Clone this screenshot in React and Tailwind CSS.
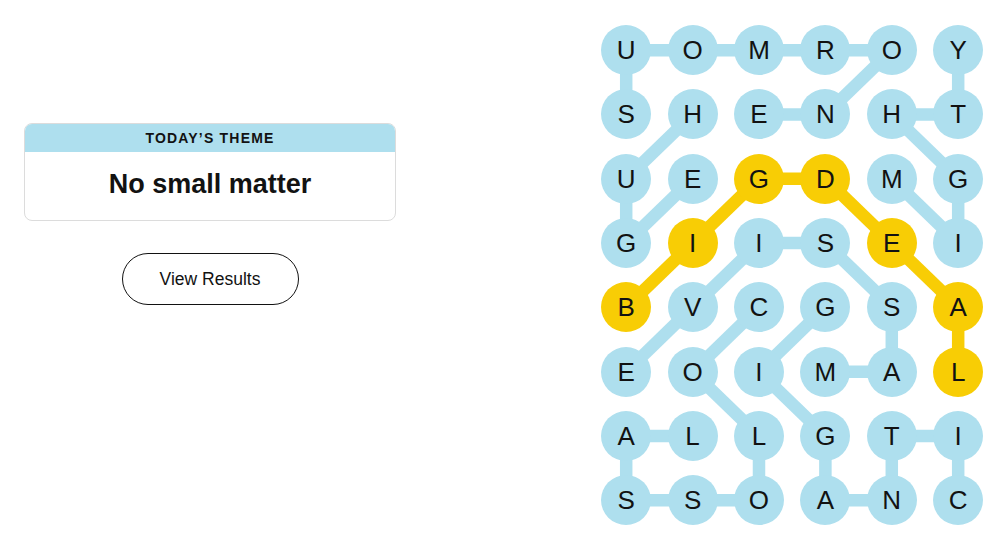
import React from "react";

const GRID = [
  "UOMROY",
  "SHENHT",
  "UEGDMG",
  "GIISEI",
  "BVCGSA",
  "EOIMAL",
  "ALLGTI",
  "SSOANC",
];

const CW = 66.4;
const CH = 64.3;

const BLUE_EDGES = [
  [[1, 2], [1, 3]], [[1, 3], [0, 4]], [[0, 4], [0, 3]], [[0, 3], [0, 2]], [[0, 2], [0, 1]], [[0, 1], [0, 0]], [[0, 0], [1, 0]],
  [[1, 1], [2, 0]], [[2, 0], [3, 0]], [[3, 0], [2, 1]],
  [[2, 4], [3, 5]], [[3, 5], [2, 5]], [[2, 5], [1, 4]], [[1, 4], [1, 5]], [[1, 5], [0, 5]],
  [[5, 3], [5, 4]], [[5, 4], [4, 4]], [[4, 4], [3, 3]], [[3, 3], [3, 2]], [[3, 2], [4, 1]], [[4, 1], [5, 0]],
  [[4, 2], [5, 1]], [[5, 1], [6, 2]], [[6, 2], [7, 2]], [[7, 2], [7, 1]], [[7, 1], [7, 0]], [[7, 0], [6, 0]], [[6, 0], [6, 1]],
  [[4, 3], [5, 2]], [[5, 2], [6, 3]], [[6, 3], [7, 3]], [[7, 3], [7, 4]], [[7, 4], [6, 4]], [[6, 4], [6, 5]], [[6, 5], [7, 5]],
];

const YELLOW_EDGES = [
  [[4, 0], [3, 1]], [[3, 1], [2, 2]], [[2, 2], [2, 3]], [[2, 3], [3, 4]], [[3, 4], [4, 5]], [[4, 5], [5, 5]],
];

const YELLOW = new Set(["4,0", "3,1", "2,2", "2,3", "3,4", "4,5", "5,5"]);

const cx = (c) => c * CW + CW / 2;
const cy = (r) => r * CH + CH / 2;

function Board() {
  return (
    <div className="relative w-[398.4px] h-[514.4px]">
      <svg className="absolute inset-0" width="398.4" height="514.4" viewBox="0 0 398.4 514.4">
        {BLUE_EDGES.map(([a, b], i) => (
          <line key={"b" + i} x1={cx(a[1])} y1={cy(a[0])} x2={cx(b[1])} y2={cy(b[0])} stroke="#aedfee" strokeWidth="12.5" />
        ))}
        {YELLOW_EDGES.map(([a, b], i) => (
          <line key={"y" + i} x1={cx(a[1])} y1={cy(a[0])} x2={cx(b[1])} y2={cy(b[0])} stroke="#f8cd05" strokeWidth="12.5" />
        ))}
      </svg>
      <div className="relative grid grid-cols-[repeat(6,66.4px)] grid-rows-[repeat(8,64.3px)]">
        {GRID.map((row, r) =>
          row.split("").map((ch, c) => (
            <div key={r + "-" + c} className="flex items-center justify-center">
              <div
                className={
                  "w-[50px] h-[50px] rounded-full flex items-center justify-center text-[26px] leading-none text-[#121212] " +
                  (YELLOW.has(r + "," + c) ? "bg-[#f8cd05]" : "bg-[#aedfee]")
                }
                style={{ fontFamily: "'Liberation Sans', Arial, sans-serif" }}
              >
                {ch}
              </div>
            </div>
          ))
        )}
      </div>
    </div>
  );
}

export default function App() {
  return (
    <div
      className="flex w-[1000px] h-[543px] bg-white overflow-hidden"
      style={{ fontFamily: "'Liberation Sans', Arial, sans-serif" }}
    >
      <div className="w-[420px] px-6 pt-[123px] flex flex-col items-center">
        <div className="w-[372px] rounded-lg border border-[#dcdcdc] overflow-hidden">
          <div className="h-[28px] bg-[#aedfee] flex items-center justify-center text-[14px] font-bold tracking-[1.2px] text-[#121212]">
            TODAY’S THEME
          </div>
          <div className="h-[68px] pb-[3px] flex items-center justify-center text-[27px] font-bold text-[#121212]">
            No small matter
          </div>
        </div>
        <button className="mt-8 w-[177px] h-[52px] rounded-full border border-[#121212] bg-white text-[17.5px] text-[#121212] flex items-center justify-center">
          View Results
        </button>
      </div>
      <div className="ml-[173px] mt-[18px]">
        <Board />
      </div>
    </div>
  );
}
